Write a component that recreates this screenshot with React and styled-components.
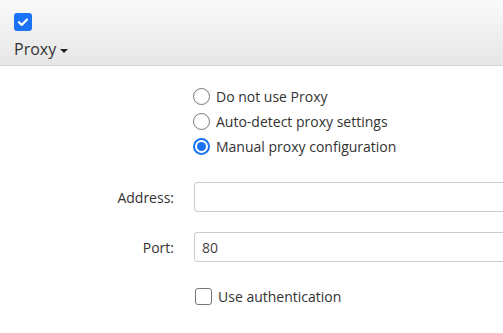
import styled, { createGlobalStyle } from "styled-components";

const Global = createGlobalStyle`
  body {
    margin: 0;
    background: #fff;
    font-family: "Open Sans", "Liberation Sans", sans-serif;
    color: #333;
  }
`;

const Header = styled.div`
  height: 66px;
  box-sizing: border-box;
  padding: 11px 14px 0;
  background: linear-gradient(#fafafa, #e6e6e6);
  border-bottom: 1px solid #d6d6d6;
`;

const Check = styled.span`
  display: inline-flex;
  align-items: center;
  justify-content: center;
  width: ${(p) => p.size}px;
  height: ${(p) => p.size}px;
  box-sizing: border-box;
  border-radius: 3px;
  border: ${(p) => (p.checked ? "none" : "1.5px solid #767676")};
  background: ${(p) => (p.checked ? "#1a73f5" : "#fff")};
  flex-shrink: 0;
`;

const Title = styled.div`
  display: flex;
  align-items: center;
  gap: 4px;
  margin-top: 5px;
  font-size: 16px;
  line-height: 22px;
  color: #333;
`;

const Caret = styled.span`
  width: 0;
  height: 0;
  border-left: 4px solid transparent;
  border-right: 4px solid transparent;
  border-top: 4px solid #222;
  margin-top: 3px;
`;

const Body = styled.div`
  padding-top: 18px;
  display: grid;
  grid-template-columns: 174px 1fr;
  column-gap: 20px;
  font-size: 14px;
`;

const Options = styled.div`
  grid-column: 2;
  display: flex;
  flex-direction: column;
  margin-left: -1px;
`;

const Option = styled.label`
  display: flex;
  align-items: center;
  gap: 6px;
  height: 25px;
`;

const Radio = styled.span`
  width: 17px;
  height: 17px;
  box-sizing: border-box;
  border-radius: 50%;
  border: ${(p) => (p.checked ? "2px solid #1a73f5" : "1.5px solid #767676")};
  display: flex;
  align-items: center;
  justify-content: center;
  &::after {
    content: "";
    display: ${(p) => (p.checked ? "block" : "none")};
    width: 9px;
    height: 9px;
    border-radius: 50%;
    background: #1a73f5;
  }
`;

const Label = styled.div`
  margin-top: ${(p) => p.top}px;
  height: 30px;
  display: flex;
  align-items: center;
  justify-content: flex-end;
  color: #333;
`;

const Field = styled.div`
  margin-top: ${(p) => p.top}px;
  height: 30px;
  box-sizing: border-box;
  border: 1px solid #ccc;
  border-right: none;
  border-radius: 4px 0 0 4px;
  display: flex;
  align-items: center;
  padding-left: 7px;
  color: #444;
`;

const AuthRow = styled.label`
  grid-column: 2;
  display: flex;
  align-items: center;
  gap: 6px;
  margin-top: 25px;
  padding-left: 1px;
`;

export default function App() {
  return (
    <>
      <Global />
      <Header>
        <Check checked size={18}>
          <svg width="12" height="12" viewBox="0 0 12 12">
            <path d="M2 6.2l2.7 2.7L10 3.5" fill="none" stroke="#fff" strokeWidth="2.2" strokeLinecap="round" strokeLinejoin="round" />
          </svg>
        </Check>
        <Title>
          Proxy
          <Caret />
        </Title>
      </Header>
      <Body>
        <Options>
          <Option><Radio />Do not use Proxy</Option>
          <Option><Radio />Auto-detect proxy settings</Option>
          <Option><Radio checked />Manual proxy configuration</Option>
        </Options>
        <Label top={23}>Address:</Label>
        <Field top={23} />
        <Label top={20}>Port:</Label>
        <Field top={20}>80</Field>
        <AuthRow>
          <Check size={17} />
          Use authentication
        </AuthRow>
      </Body>
    </>
  );
}
